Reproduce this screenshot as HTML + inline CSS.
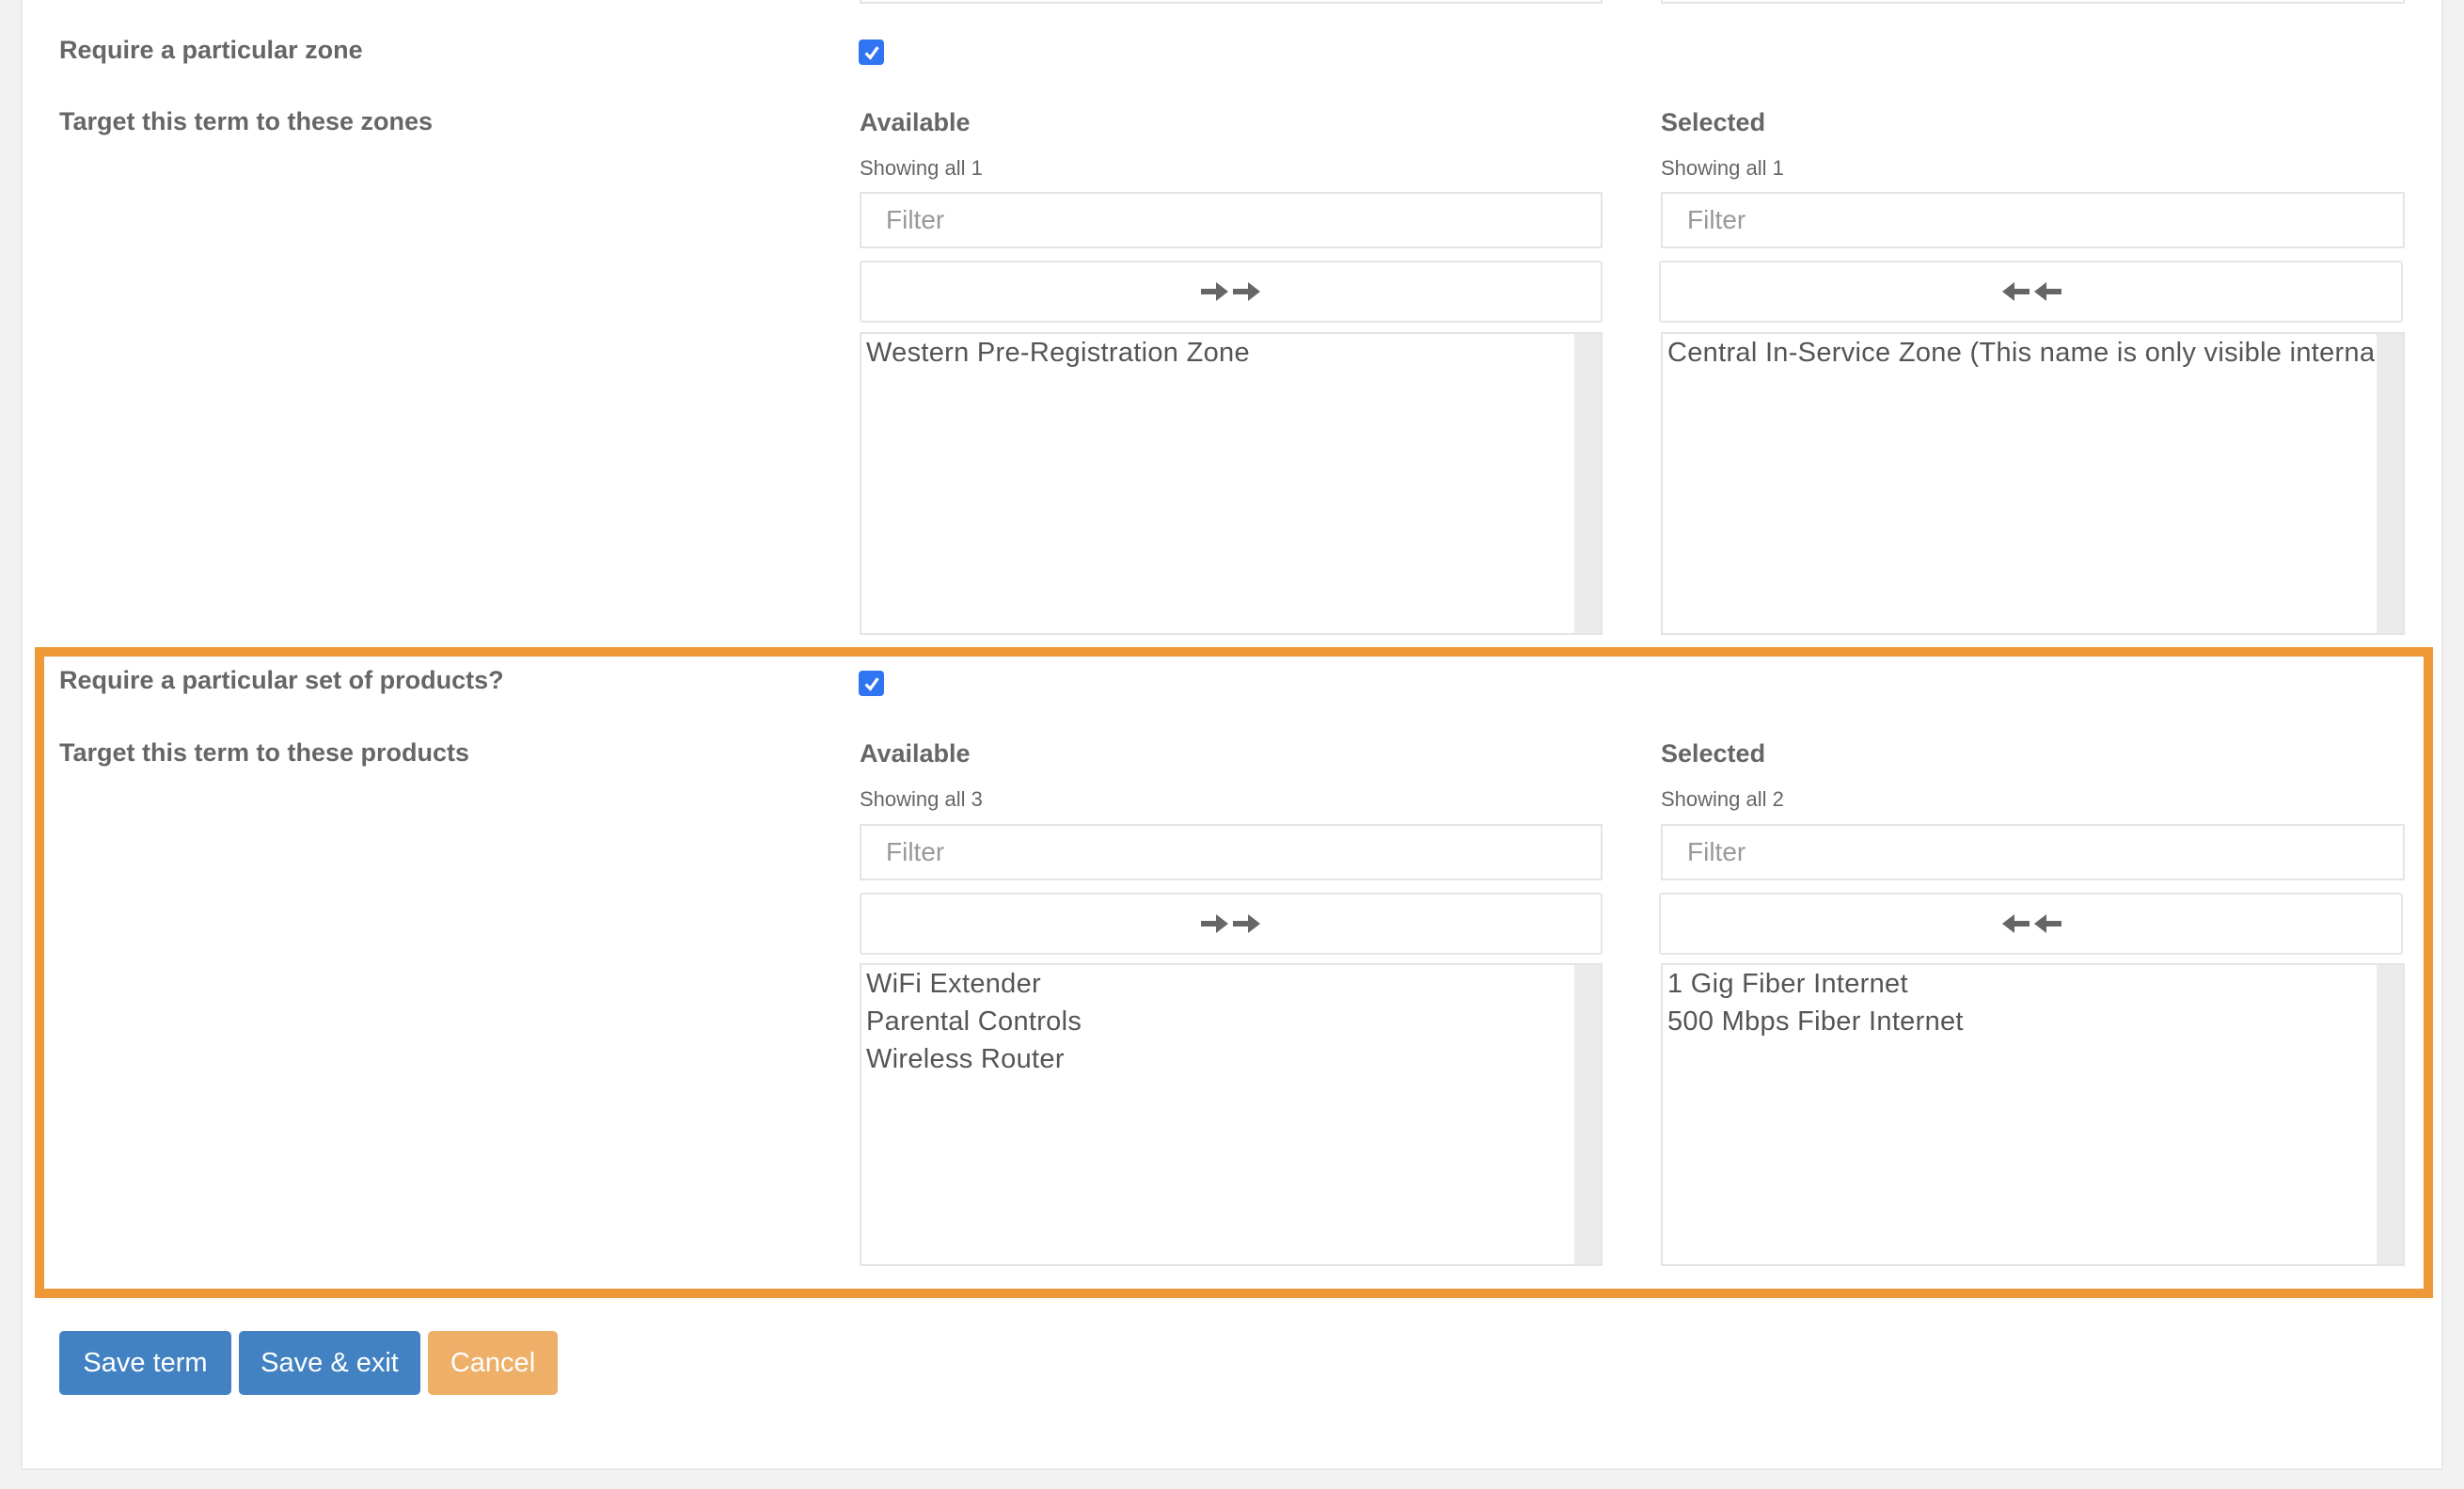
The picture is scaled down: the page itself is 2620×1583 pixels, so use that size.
<!DOCTYPE html>
<html><head><meta charset="utf-8"><style>
*{box-sizing:border-box;margin:0;padding:0}
body{width:2620px;height:1583px;background:#f2f2f2;font-family:"Liberation Sans",sans-serif;position:relative;overflow:hidden;color:#666}
.panel{position:absolute;left:22px;top:-4px;width:2576px;height:1567px;background:#fff;border:2px solid #e8e8e8;border-top:none}
.a{position:absolute}
.lbl{font-weight:bold;font-size:27px;color:#666;line-height:30px}
.sm{font-size:22px;color:#666;line-height:26px}
.inp{border:2px solid #e4e4e4;background:#fff}
.ph{font-size:28px;color:#999;position:absolute;left:26px;top:50%;transform:translateY(-50%)}
.btnbox{border:2px solid #e6e6e6;border-radius:3px;background:#fff;display:flex;align-items:center;justify-content:center}
.list{border:2px solid #e4e4e4;background:#fff;overflow:hidden}
.list .sb{position:absolute;right:0;top:0;bottom:0;width:28px;background:#ebebeb}
.list .it{font-size:29px;color:#555;line-height:40px;padding-left:5px;padding-top:0px;white-space:nowrap;letter-spacing:0.3px}
.cb{width:27px;height:27px;background:#2f74f0;border-radius:4px;display:flex;align-items:center;justify-content:center}
.orange{position:absolute;left:37px;top:688px;width:2550px;height:692px;border:10px solid #ef9838}
.bt{position:absolute;top:1415px;height:68px;border-radius:5px;color:#fff;font-size:29px;display:flex;align-items:center;justify-content:center}
</style></head><body>
<div class="panel"></div>

<div class="a inp" style="left:914px;top:-60px;width:790px;height:64px"></div>
<div class="a inp" style="left:1766px;top:-60px;width:791px;height:64px"></div>

<div class="a lbl" style="left:63px;top:38px">Require a particular zone</div>
<div class="a cb" style="left:913px;top:42px"><svg width="18" height="18" viewBox="0 0 17 17"><path d="M2.5 9 L7 13.5 L14.5 3" stroke="#fff" stroke-width="3" fill="none"/></svg></div>
<div class="a lbl" style="left:63px;top:114px">Target this term to these zones</div>

<div class="a lbl" style="left:914px;top:115px">Available</div>
<div class="a sm" style="left:914px;top:166px">Showing all 1</div>
<div class="a inp" style="left:914px;top:204px;width:790px;height:60px"><span class="ph">Filter</span></div>
<div class="a btnbox" style="left:914px;top:277px;width:790px;height:66px"><svg width="68" height="26" viewBox="0 0 68 26"><path d="M2 10h16V3l13 10-13 10v-7H2z" fill="#666"/><path d="M36 10h16V3l13 10-13 10v-7H36z" fill="#666"/></svg></div>
<div class="a list" style="left:914px;top:353px;width:790px;height:322px"><div class="sb"></div><div class="it">Western Pre-Registration Zone</div></div>

<div class="a lbl" style="left:1766px;top:115px">Selected</div>
<div class="a sm" style="left:1766px;top:166px">Showing all 1</div>
<div class="a inp" style="left:1766px;top:204px;width:791px;height:60px"><span class="ph">Filter</span></div>
<div class="a btnbox" style="left:1764px;top:277px;width:791px;height:66px"><svg width="68" height="26" viewBox="0 0 68 26"><path d="M32 10H16V3L3 13l13 10v-7h16z" fill="#666"/><path d="M66 10H50V3L37 13l13 10v-7h16z" fill="#666"/></svg></div>
<div class="a list" style="left:1766px;top:353px;width:791px;height:322px"><div class="it">Central In-Service Zone (This name is only visible internally)</div><div class="sb"></div></div>

<div class="orange"></div>
<div class="a lbl" style="left:63px;top:708px">Require a particular set of products?</div>
<div class="a cb" style="left:913px;top:713px"><svg width="18" height="18" viewBox="0 0 17 17"><path d="M2.5 9 L7 13.5 L14.5 3" stroke="#fff" stroke-width="3" fill="none"/></svg></div>
<div class="a lbl" style="left:63px;top:785px">Target this term to these products</div>

<div class="a lbl" style="left:914px;top:786px">Available</div>
<div class="a sm" style="left:914px;top:837px">Showing all 3</div>
<div class="a inp" style="left:914px;top:876px;width:790px;height:60px"><span class="ph">Filter</span></div>
<div class="a btnbox" style="left:914px;top:949px;width:790px;height:66px"><svg width="68" height="26" viewBox="0 0 68 26"><path d="M2 10h16V3l13 10-13 10v-7H2z" fill="#666"/><path d="M36 10h16V3l13 10-13 10v-7H36z" fill="#666"/></svg></div>
<div class="a list" style="left:914px;top:1024px;width:790px;height:322px"><div class="sb"></div><div class="it">WiFi Extender<br>Parental Controls<br>Wireless Router</div></div>

<div class="a lbl" style="left:1766px;top:786px">Selected</div>
<div class="a sm" style="left:1766px;top:837px">Showing all 2</div>
<div class="a inp" style="left:1766px;top:876px;width:791px;height:60px"><span class="ph">Filter</span></div>
<div class="a btnbox" style="left:1764px;top:949px;width:791px;height:66px"><svg width="68" height="26" viewBox="0 0 68 26"><path d="M32 10H16V3L3 13l13 10v-7h16z" fill="#666"/><path d="M66 10H50V3L37 13l13 10v-7h16z" fill="#666"/></svg></div>
<div class="a list" style="left:1766px;top:1024px;width:791px;height:322px"><div class="sb"></div><div class="it">1 Gig Fiber Internet<br>500 Mbps Fiber Internet</div></div>

<div class="bt" style="left:63px;width:183px;background:#4281c2">Save term</div>
<div class="bt" style="left:254px;width:193px;background:#4281c2">Save &amp; exit</div>
<div class="bt" style="left:455px;width:138px;background:#eeb068">Cancel</div>
</body></html>
